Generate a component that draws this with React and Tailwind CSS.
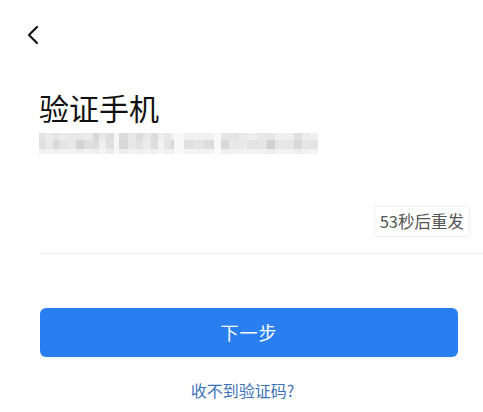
import React from "react";

// [width, top, mid, bottom]
const cols = [
  [7, "#e4e4e4", "#e0e0e0", "#f0f0f0"],
  [7, "#ececec", "#eaeaea", "#f2f2f2"],
  [6, "#e6e6e6", "#d8d8d8", "#efefef"],
  [9, "#ececec", "#e4e4e4", "#f2f2f2"],
  [8, "#e8e8e8", "#e8e8e8", "#f2f2f2"],
  [8, "#e8e8e8", "#d4d4d4", "#efefef"],
  [9, "#ebebeb", "#e0e0e0", "#f2f2f2"],
  [6, "#d8d8d8", "#dcdcdc", "#efefef"],
  [7, "#e8e8e8", "#efefef", "#f3f3f3"],
  [8, "#dedede", "#e0e0e0", "#ececec"],
  [5, "#f6f6f6", "#f6f6f6", "#f8f8f8"],
  [9, "#dcdcdc", "#d8d8d8", "#eeeeee"],
  [8, "#e6e6e6", "#e8e8e8", "#f2f2f2"],
  [7, "#dcdcdc", "#e2e2e2", "#efefef"],
  [8, "#e8e8e8", "#ececec", "#f3f3f3"],
  [7, "#dcdcdc", "#dcdcdc", "#efefef"],
  [6, "#eeeeee", "#f2f2f2", "#f5f5f5"],
  [7, "#e8e8e8", "#e4e4e4", "#f1f1f1"],
  [3, "#f2f2f2", "#d8d8d8", "#f2f2f2"],
  [10, "#f8f8f8", "#f8f8f8", "#fafafa"],
  [10, "#f0f0f0", "#e0e0e0", "#f3f3f3"],
  [10, "#f0f0f0", "#e4e4e4", "#f3f3f3"],
  [10, "#f0f0f0", "#dcdcdc", "#f3f3f3"],
  [7, "#f8f8f8", "#f8f8f8", "#fafafa"],
  [8, "#e6e6e6", "#d8d8d8", "#efefef"],
  [10, "#e4e4e4", "#e8e8e8", "#f1f1f1"],
  [8, "#eaeaea", "#eaeaea", "#f2f2f2"],
  [10, "#eeeeee", "#e4e4e4", "#f2f2f2"],
  [10, "#e8e8e8", "#e4e4e4", "#f1f1f1"],
  [8, "#e6e6e6", "#d0d0d0", "#eeeeee"],
  [9, "#f0f0f0", "#e8e8e8", "#f3f3f3"],
  [10, "#eeeeee", "#e6e6e6", "#f2f2f2"],
  [8, "#e0e0e0", "#d8d8d8", "#eeeeee"],
  [8, "#ececec", "#e6e6e6", "#f2f2f2"],
  [8, "#f0f0f0", "#e4e4e4", "#f3f3f3"],
];

function Blur() {
  return (
    <div className="flex h-[21px]">
      {cols.map(([w, t, m, b], i) => (
        <div key={i} className="flex flex-col" style={{ width: w }}>
          <div className="h-[7px]" style={{ background: t }} />
          <div className="h-[9px]" style={{ background: m }} />
          <div className="h-[5px]" style={{ background: b }} />
        </div>
      ))}
    </div>
  );
}

export default function App() {
  return (
    <div
      className="w-[483px] h-[412px] bg-white overflow-hidden flex flex-col"
      style={{ fontFamily: '"Noto Sans CJK SC", "Noto Sans", sans-serif' }}
    >
      <div className="h-[70px] pl-[26px] pt-[25px]">
        <svg width="14" height="20" viewBox="0 0 14 20" fill="none">
          <path d="M11 2 L3 10 L11 18" stroke="#111" strokeWidth="2.2" strokeLinecap="round" strokeLinejoin="round" />
        </svg>
      </div>
      <div className="pl-[39px]">
        <h1 className="mt-[17px] text-[30px] leading-[40px] text-[#111] font-normal">验证手机</h1>
        <div className="mt-[6px]">
          <Blur />
        </div>
      </div>
      <div className="ml-[40px] mt-[52px] h-[48px] border-b border-[#f0f0f0] flex items-start justify-end pr-[13px]">
        <div className="h-[31px] px-[5px] border border-[#efefef] rounded-[3px] flex items-center text-[16.5px] text-[#555] leading-none">
          53秒后重发
        </div>
      </div>
      <div className="px-[40px] pr-[25px] mt-[54px]">
        <button className="w-[418px] h-[49px] rounded-[6px] bg-[#2a7ff0] text-white text-[18px] tracking-[1px]">
          下一步
        </button>
      </div>
      <div className="mt-[22px] text-center text-[16px] text-[#3b72b8] leading-[22px] pl-[2px]">收不到验证码?</div>
    </div>
  );
}
